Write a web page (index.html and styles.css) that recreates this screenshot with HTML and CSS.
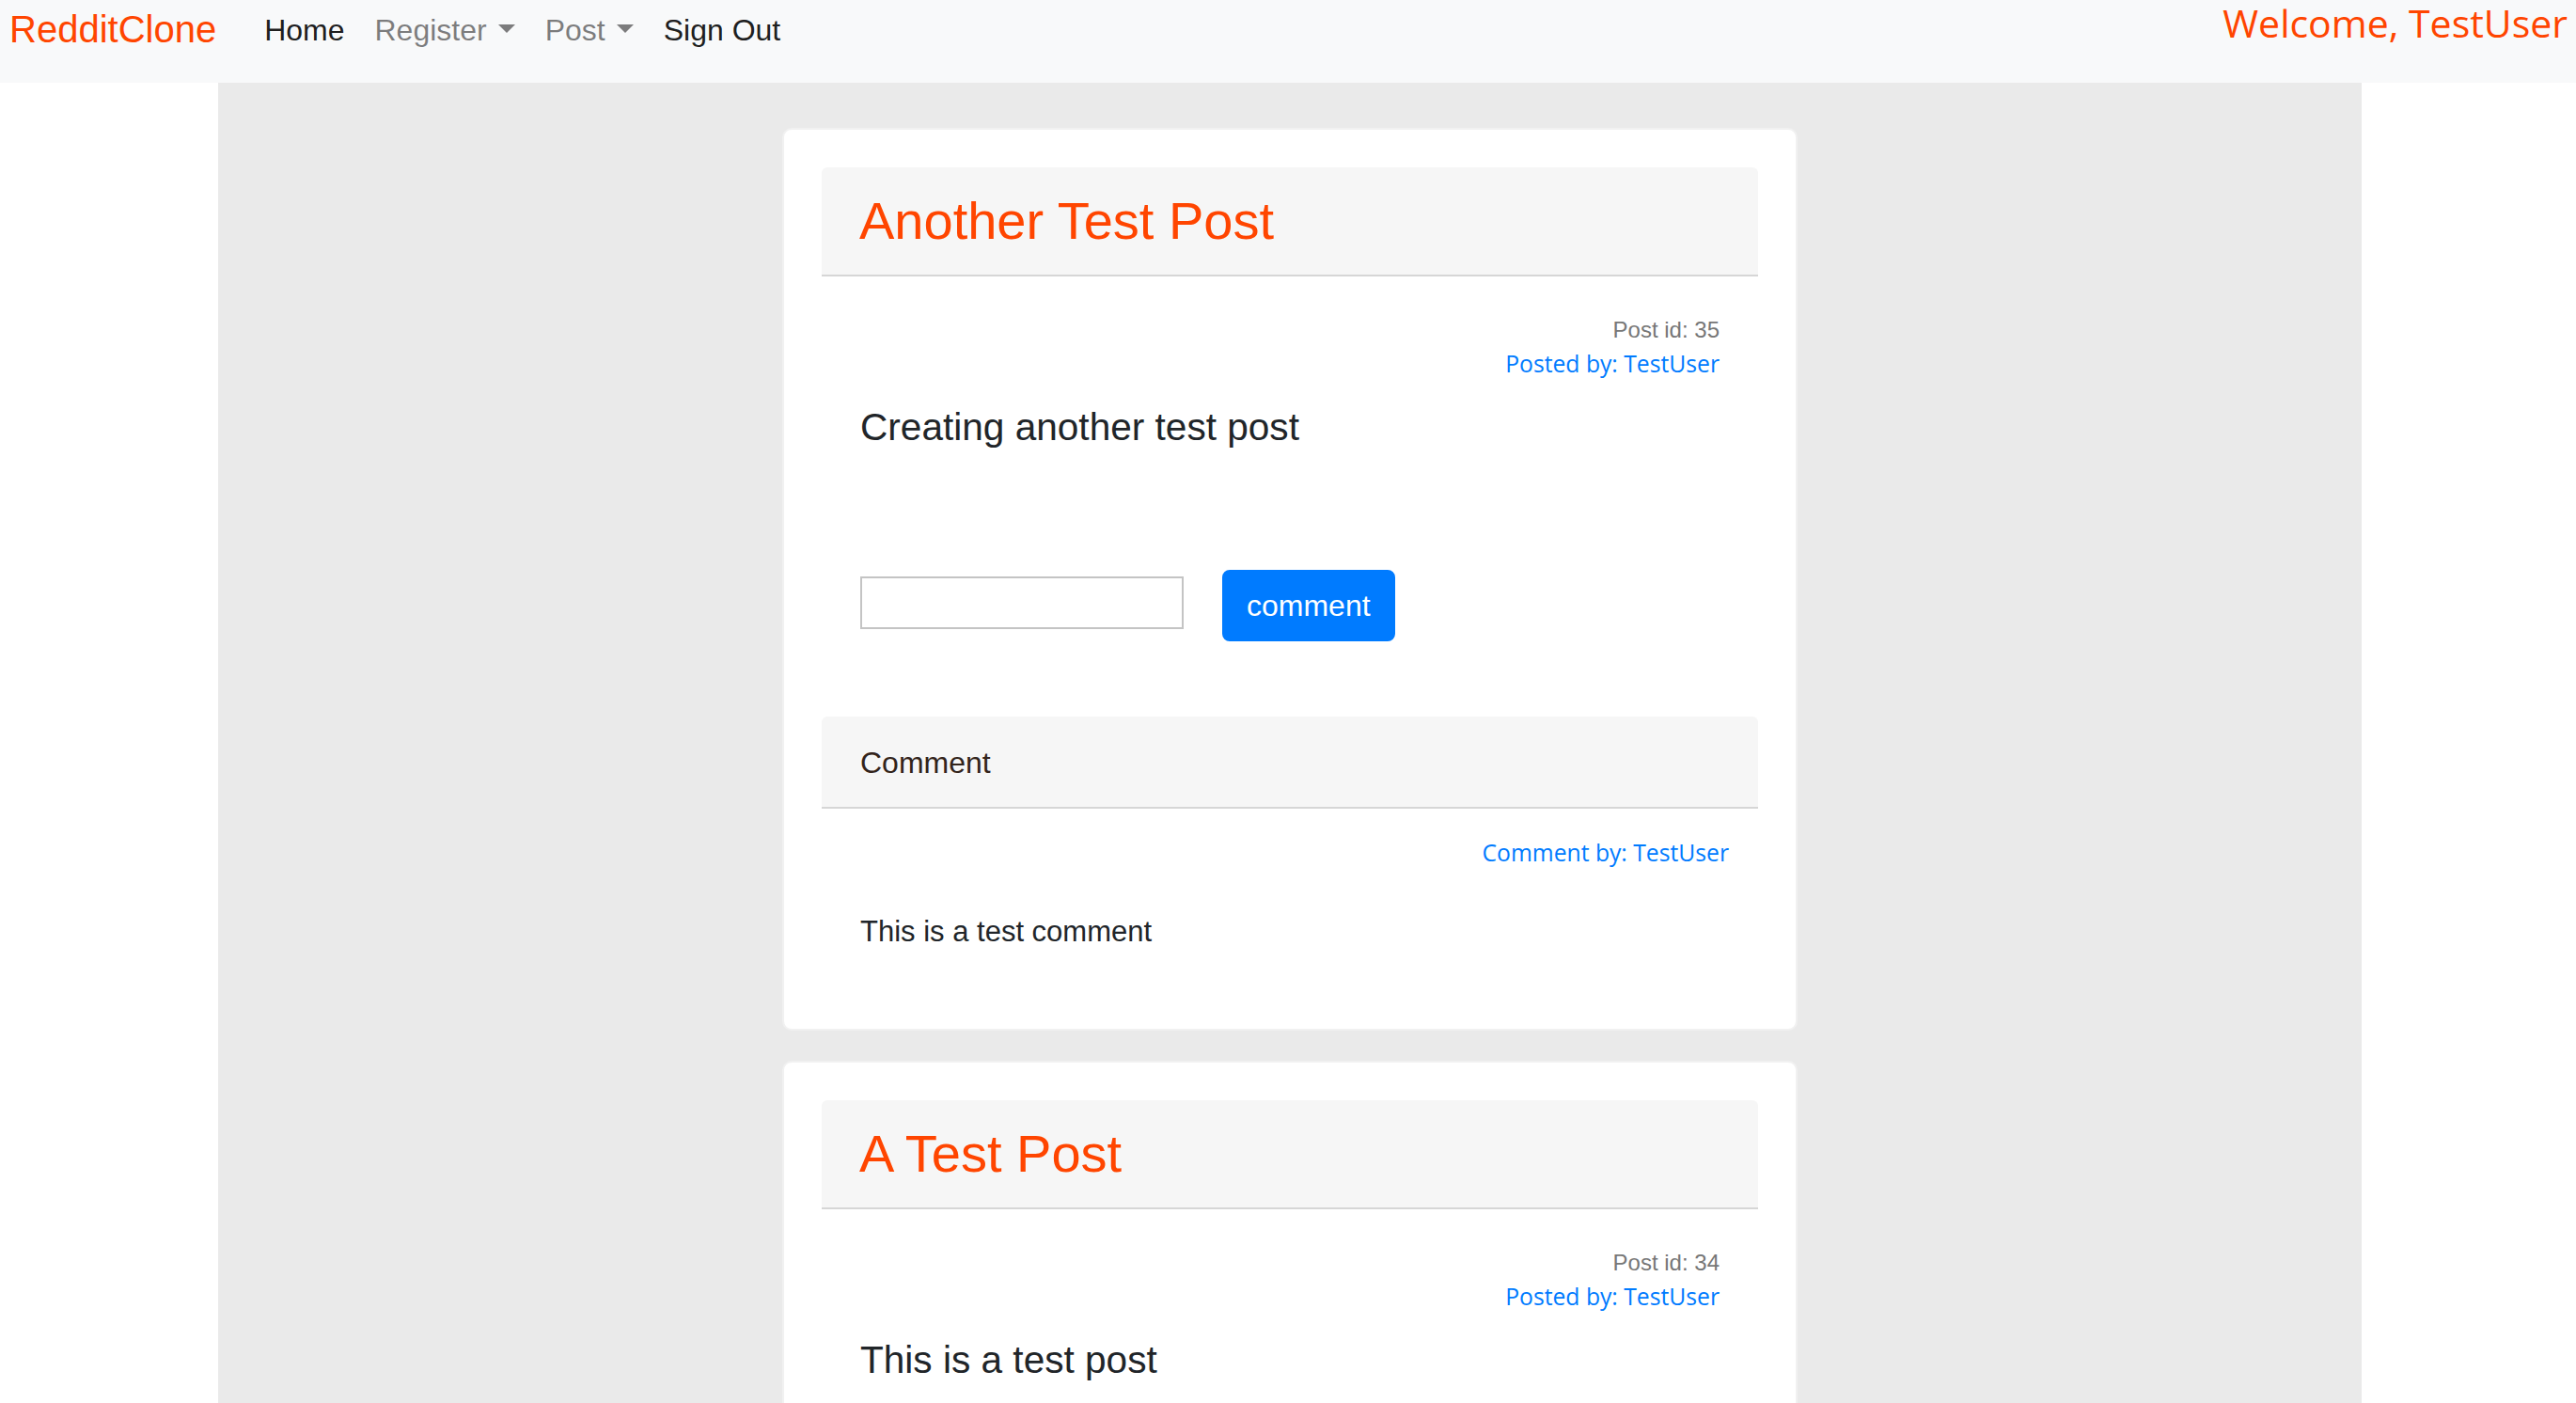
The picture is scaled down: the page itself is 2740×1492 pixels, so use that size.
FILE: index.html
```html
<!DOCTYPE html>
<html lang="en">
<head>
<meta charset="utf-8">
<title>RedditClone</title>
<link rel="stylesheet" href="styles.css">
</head>
<body>
<nav class="navbar">
  <a class="brand" href="#">RedditClone</a>
  <ul class="nav-links">
    <li><a class="nav-link active" href="#">Home</a></li>
    <li><a class="nav-link muted dropdown-toggle" href="#">Register</a></li>
    <li><a class="nav-link muted dropdown-toggle" href="#">Post</a></li>
    <li><a class="nav-link active" href="#">Sign Out</a></li>
  </ul>
  <span class="welcome">Welcome, TestUser</span>
</nav>

<main class="container">
  <article class="card">
    <header class="card-header">
      <h3 class="post-title">Another Test Post</h3>
    </header>
    <div class="post-body">
      <div class="post-meta">
        <div class="post-id">Post id: 35</div>
        <a class="posted-by" href="#">Posted by: TestUser</a>
      </div>
      <p class="post-content">Creating another test post</p>
    </div>
    <form class="comment-form">
      <input class="comment-input" type="text">
      <button class="btn-comment" type="button">comment</button>
    </form>
    <section class="comments">
      <div class="comment-header">Comment</div>
      <div class="comment-body">
        <div class="comment-meta"><a class="comment-by" href="#">Comment by: TestUser</a></div>
        <p class="comment-text">This is a test comment</p>
      </div>
    </section>
  </article>

  <article class="card">
    <header class="card-header">
      <h3 class="post-title">A Test Post</h3>
    </header>
    <div class="post-body">
      <div class="post-meta">
        <div class="post-id">Post id: 34</div>
        <a class="posted-by" href="#">Posted by: TestUser</a>
      </div>
      <p class="post-content">This is a test post</p>
    </div>
    <form class="comment-form">
      <input class="comment-input" type="text">
      <button class="btn-comment" type="button">comment</button>
    </form>
  </article>
</main>
</body>
</html>
```

FILE: styles.css
```css
* { box-sizing: border-box; }

body {
  margin: 0;
  background: #ffffff;
  font-family: "Liberation Sans", Arial, Helvetica, sans-serif;
  color: #212529;
}

a { text-decoration: none; }

/* ---------- navbar ---------- */
.navbar {
  display: flex;
  align-items: flex-start;
  height: 88px;
  background: #f8f9fa;
  padding: 0 9px 0 10px;
}

.brand {
  font-size: 40px;
  line-height: 60px;
  padding-top: 1px;
  margin-right: 35px;
  color: #ff4500;
}

.nav-links {
  display: flex;
  list-style: none;
  margin: 0;
  padding: 0;
}

.nav-link {
  display: block;
  padding: 8px 16px 0;
  font-size: 32px;
  line-height: 48px;
  color: rgba(0, 0, 0, 0.9);
}

.nav-link.muted { color: rgba(0, 0, 0, 0.5); }

.dropdown-toggle::after {
  content: "";
  display: inline-block;
  margin-left: 12px;
  vertical-align: 0.255em;
  border-top: 0.3em solid;
  border-right: 0.3em solid transparent;
  border-left: 0.3em solid transparent;
  border-bottom: 0;
}

.welcome {
  margin-left: auto;
  padding-top: 2px;
  font-family: "Open Sans", "DejaVu Sans", sans-serif;
  font-size: 41px;
  line-height: 44px;
  color: #ff4500;
}

/* ---------- content ---------- */
.container {
  width: 2280px;
  margin-left: 232px;
  min-height: 1404px;
  background: #eaeaea;
  padding-top: 48px;
  overflow: hidden;
}

.card {
  width: 1080px;
  margin: 0 auto 32px;
  background: #ffffff;
  border: 2px solid #f1f1f1;
  border-radius: 10px;
  padding: 40px;
}

.card-header {
  background: #f6f6f6;
  border-bottom: 2px solid #d6d6d6;
  border-radius: 6px 6px 0 0;
  padding: 23px 40px 24px;
}

.post-title {
  margin: 0;
  font-size: 56px;
  line-height: 67px;
  font-weight: 400;
  color: #ff4500;
}

.post-body {
  padding: 39px 41px 0;
}

.post-meta { text-align: right; }

.post-id {
  font-size: 24px;
  line-height: 36px;
  color: #777777;
}

.posted-by,
.comment-by {
  display: block;
  font-family: "Open Sans", "DejaVu Sans", sans-serif;
  font-size: 24.7px;
  line-height: 36px;
  color: #007bff;
}

.post-content {
  margin: 19px 0 0;
  font-size: 40.6px;
  line-height: 60px;
  color: #212529;
}

.comment-form {
  display: flex;
  align-items: flex-start;
  margin-top: 122px;
  padding-left: 41px;
}

.comment-input {
  width: 344px;
  height: 56px;
  margin: 7px 0 0;
  padding: 0 8px;
  border: 2px solid #c4c4c4;
  background: #ffffff;
}

.btn-comment {
  margin-left: 41px;
  padding: 12px 24px;
  font-family: "Liberation Sans", Arial, sans-serif;
  font-size: 32px;
  line-height: 48px;
  color: #ffffff;
  background: #007bff;
  border: 2px solid #007bff;
  border-radius: 8px;
}

.comments { margin-top: 80px; }

.comment-header {
  background: #f6f6f6;
  border-bottom: 2px solid #d6d6d6;
  border-radius: 6px 6px 0 0;
  padding: 25px 40px 23px 41px;
  font-size: 32px;
  line-height: 48px;
  color: #33241b;
}

.comment-body {
  padding: 29px 31px 0 41px;
}

.comment-meta { text-align: right; }

.comment-text {
  margin: 42px 0 39px;
  font-size: 31px;
  line-height: 48px;
  color: #212529;
}
```
